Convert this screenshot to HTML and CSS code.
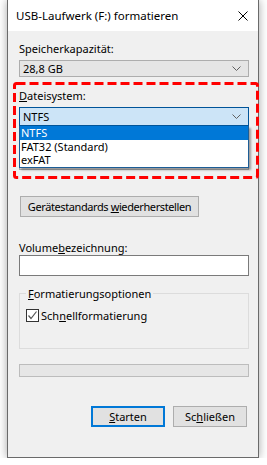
FILE: index.html
```html
<!DOCTYPE html>
<html lang="de">
<head>
  <meta charset="UTF-8" />
  <meta name="viewport" content="width=device-width, initial-scale=1.0" />
  <title>USB-Laufwerk (F:) formatieren</title>
  <link rel="stylesheet" href="styles.css">
</head>
<body>
  <div class="window">
    <div class="titlebar">
      <span class="title">USB-Laufwerk (F:) formatieren</span>
      <svg class="close" width="10" height="10" viewBox="0 0 10 10">
        <path d="M0.5 0.5 L9.5 9.5 M9.5 0.5 L0.5 9.5" stroke="#000" stroke-width="1" fill="none"/>
      </svg>
    </div>

    <div class="content">
      <div class="label first">Speicherkapazität:</div>
      <div class="combo small">
        <span>28,8 GB</span>
        <svg class="chevron" width="9" height="5" viewBox="0 0 9 5"><path d="M0.5 0.5 L4.5 4.5 L8.5 0.5" stroke="#606060" fill="none"/></svg>
      </div>

      <div class="label gap"><u>D</u>ateisystem:</div>
      <div class="drop">
        <div class="combo focused">
          <span>NTFS</span>
          <svg class="chevron" width="9" height="5" viewBox="0 0 9 5"><path d="M0.5 0.5 L4.5 4.5 L8.5 0.5" stroke="#606060" fill="none"/></svg>
        </div>
        <ul class="list">
          <li class="selected">NTFS</li>
          <li>FAT32 (Standard)</li>
          <li>exFAT</li>
        </ul>
      </div>

      <!-- allocation size row, covered by the open list -->
      <div class="spacer"></div>
      <div class="combo"></div>

      <button class="btn restore">Gerätestandards <u>w</u>iederherstellen</button>

      <div class="label volume">Volume<u>b</u>ezeichnung:</div>
      <div class="textbox"></div>

      <fieldset class="options">
        <legend><u>F</u>ormatierungsoptionen</legend>
        <div class="check">
          <span class="box">
            <svg width="11" height="11" viewBox="0 0 11 11"><path d="M1.5 5.5 L4 8.5 L9.5 1.5" stroke="#555" stroke-width="1.2" fill="none"/></svg>
          </span>
          <span>Sch<u>n</u>ellformatierung</span>
        </div>
      </fieldset>

      <div class="progress"></div>

      <div class="actions">
        <button class="btn default"><u>S</u>tarten</button>
        <button class="btn">Sc<u>h</u>ließen</button>
      </div>
    </div>

    <svg class="marker" width="246" height="97" viewBox="0 0 246 97">
      <rect x="1.5" y="1.5" width="243" height="94" rx="2" fill="none" stroke="#f00" stroke-width="3" stroke-dasharray="9 4"/>
    </svg>
  </div>
</body>
</html>
```

FILE: styles.css
```css
body {
  margin: 0;
  background: #fff;
  font-family: "Noto Sans", "Liberation Sans", sans-serif;
  font-size: 11px;
  color: #000;
}
.window {
  position: relative;
  margin-left: 7px;
  width: 250px;
  height: 457px;
  border: 1px solid #6a6a6a;
  border-top: none;
  background: #f0f0f0;
  box-shadow: 0 0 9px rgba(0,0,0,0.35);
}
.titlebar {
  height: 31px;
  background: #fff;
  display: flex;
  align-items: center;
  justify-content: space-between;
  padding: 0 10px 0 8px;
  font-size: 11.5px;
}
.title {
  line-height: 15px;
}
.close {
  display: block;
}
.content {
  padding: 10px 9px 0 11px;
}
.label {
  line-height: 15px;
  margin-bottom: 4px;
  white-space: nowrap;
}
.label.gap {
  margin-top: 11px;
}
.label.volume {
  margin-top: 23px;
  margin-bottom: 0;
}
.spacer {
  height: 15px;
  margin: 6px 0 4px;
}
.combo {
  height: 19px;
  box-sizing: border-box;
  border: 1px solid #adadad;
  background: #e5e5e5;
  display: flex;
  align-items: center;
  justify-content: space-between;
  padding: 0 7px 0 3px;
}
.combo.small {
  height: 17px;
}
.combo.focused {
  border-color: #005499;
  background: #cce4f7;
}
.drop {
  position: relative;
}
.list {
  position: absolute;
  top: 100%;
  left: 0;
  right: 0;
  margin: 0;
  padding: 0;
  list-style: none;
  background: #fff;
  border: 1px solid #1c5d96;
  border-top: none;
  box-shadow: 2px 2px 2px rgba(0,0,0,0.35);
  z-index: 2;
}
.list li {
  line-height: 13.5px;
  padding-left: 1px;
}
.list li.selected {
  background: #0078d7;
  color: #fff;
}
.btn {
  font-family: inherit;
  font-size: 11px;
  color: #000;
  height: 21px;
  background: #e1e1e1;
  border: 1px solid #adadad;
  padding: 0 6px;
  margin: 0;
  white-space: nowrap;
}
.btn.restore {
  display: block;
  margin: 26px 0 0 1px;
  width: 179px;
  padding: 0 4px;
  letter-spacing: -0.4px;
}
.btn.default {
  border: 2px solid #0078d7;
}
.textbox {
  height: 21px;
  box-sizing: border-box;
  background: #fff;
  border: 1px solid #7a7a7a;
}
.options {
  margin: 10px 0 0;
  padding: 7px 6px 25px;
  border: 1px solid #dcdcdc;
}
.options legend {
  padding: 0 2px;
  line-height: 15px;
}
.check {
  display: flex;
  align-items: center;
  gap: 2px;
  line-height: 15px;
}
.box {
  width: 13px;
  height: 13px;
  box-sizing: border-box;
  border: 1px solid #333;
  background: #fff;
  display: flex;
  align-items: center;
  justify-content: center;
}
.box svg {
  display: block;
}
.progress {
  margin-top: 15px;
  height: 13px;
  box-sizing: border-box;
  background: #e6e6e6;
  border: 1px solid #bcbcbc;
}
.actions {
  display: flex;
  justify-content: flex-end;
  gap: 8px;
  margin-top: 29px;
  padding-right: 2px;
}
.actions .btn {
  width: 74px;
}
.marker {
  position: absolute;
  left: 5px;
  top: 82px;
  z-index: 3;
}
```
